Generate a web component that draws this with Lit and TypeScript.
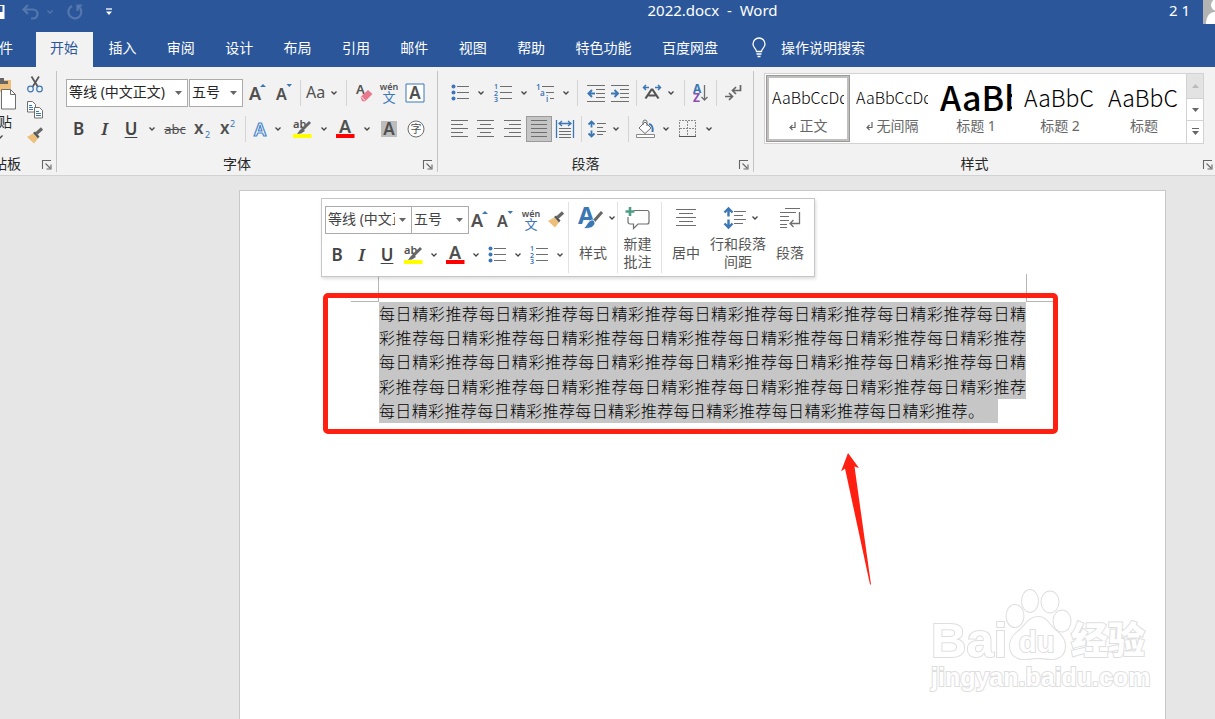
import { LitElement, html, css, svg, TemplateResult, SVGTemplateResult } from "lit";
import { customElement } from "lit/decorators.js";
import { classMap } from "lit/directives/class-map.js";

const ico = (w: number, h: number, body: SVGTemplateResult) =>
  html`<svg width=${w} height=${h} viewBox="0 0 ${w} ${h}" fill="none" aria-hidden="true">${body}</svg>`;

const GREY = "#6e6e6e";
const BLUE = "#3b76b5";

const lines = (rows: number[][]) =>
  svg`<path stroke=${GREY} d=${rows.map(([x1, x2, y]) => `M${x1} ${y}.5H${x2}`).join("")} />`;

const icons = {
  chevron: ico(8, 6, svg`<path d="M1.5 1.5 4 4l2.500-2.500" stroke="#444" stroke-width="1.300"/>`),
  caret: ico(7, 4, svg`<path d="M0 0h7L3.500 4z" fill="#666"/>`),
  launcher: ico(10, 10, svg`<path d="M.5 9V.5H9M3.500 3.500 8 8M9 4.500v4.500H4.500" stroke="#666" stroke-width="1.100"/>`),
  sub: ico(18, 18, svg`<text x="0" y="14" class="g sb" font-size="17">x</text><text x="11" y="18" class="b" font-size="9">2</text>`),
  sup: ico(18, 18, svg`<text x="0" y="14" class="g sb" font-size="17">x</text><text x="10" y="7" class="b" font-size="9">2</text>`),
  grow: ico(18, 20, svg`<text x="0" y="17" class="g sb" font-size="18">A</text><path d="M11 4h6l-3-3z" fill=${BLUE}/>`),
  shrink: ico(18, 20, svg`<text x="1" y="17" class="g sb" font-size="16">A</text><path d="M11.500 1h5.500l-2.750 3z" fill=${BLUE}/>`),
  aa: ico(22, 18, svg`<text x="1" y="14" class="g" font-size="16">Aa</text>`),
  eraser: ico(18, 20, svg`<text x="0" y="11" class="g sb" font-size="13">A</text><path d="m4.500 14 7.500-7 4.500 4-7.500 7.500-3-.500z" fill="#e8798d"/><path d="m5 13.500 4 4" stroke="#fff"/>`),
  wen: ico(20, 22, svg`<text x="10" y="8" text-anchor="middle" class="g sb" font-size="9">wén</text><text x="10" y="20" text-anchor="middle" class="b" font-size="13">文</text>`),
  boxA: ico(20, 20, svg`<path d="M1 1h18v18H1z" stroke=${BLUE} fill="#fff"/><text x="10" y="16" text-anchor="middle" class="g sb" font-size="17">A</text>`),
  outlineA: ico(18, 18, svg`<text x="9" y="15.500" text-anchor="middle" font-size="18" font-weight="600" fill="#fff" stroke="#4a86c8" stroke-width="1.200">A</text>`),
  highlight: ico(20, 20, svg`<text x="1" y="9" class="g sb" font-size="11">ab</text><path d="M18 3 10.500 10.500" stroke="#666" stroke-width="2.800"/><path d="m10 9 3 3-4 2.500-4 .500 2.500-3.500z" fill="#666"/><path d="M1 15h18.500v4H1z" fill="#ff0"/>`),
  fontColor: ico(20, 20, svg`<text x="10" y="14" text-anchor="middle" class="g sb" font-size="18">A</text><path d="M1 15h18.500v4H1z" fill="red"/>`),
  shadeA: ico(18, 18, svg`<path d="M1 1h16v16H1z" fill="#bdbdbd"/><text x="9" y="15" text-anchor="middle" class="g sb" font-size="17">A</text>`),
  circled: ico(18, 18, svg`<circle cx="9" cy="9" r="8" stroke=${GREY} fill="#fff"/><text x="9" y="13" text-anchor="middle" class="g" font-size="11">字</text>`),
  cut: ico(18, 18, svg`<path d="M5.500 1.500 12 12M13 1.500 6.500 12" stroke="#555" stroke-width="1.700"/><circle cx="4.500" cy="14" r="2.800" stroke=${BLUE} stroke-width="1.200"/><circle cx="13.500" cy="14" r="2.800" stroke=${BLUE} stroke-width="1.200"/>`),
  copy: ico(18, 18, svg`<path d="M1.500.5h5l3 3V11H1.500z" fill="#fff" stroke=${GREY}/><path d="M3 4.500h3M3 6.500h4M3 8.500h4" stroke=${BLUE}/><path d="M8.500 6.500h5l3 3v7.500h-8z" fill="#fff" stroke=${GREY}/><path d="M10 10.500h3M10 12.500h5M10 14.500h5" stroke=${BLUE}/>`),
  brush: ico(18, 18, svg`<path d="m1 10 6-3.500 5 5L8 16.500z" fill="#eebf7a"/><path d="m7 6 2-1.500 4.500 5L12 11.500z" fill="#555"/><path d="m10.500 6.500 5.500-5" stroke="#666" stroke-width="3.200"/>`),
  paste: ico(18, 34, svg`<path d="M0 4h11v12H0z" fill="#eebf7a"/><path d="M0 2h4v3h4v3H0z" fill="#666"/><path d="M1.500 13.500h9l5 5V33h-14z" fill="#fff" stroke=${GREY}/><path d="M10.500 13.500v5h5" stroke=${GREY}/>`),
  bullets: ico(18, 18, svg`<g fill=${BLUE}><circle cx="2.500" cy="2.500" r="2"/><circle cx="2.500" cy="8.500" r="2"/><circle cx="2.500" cy="14.500" r="2"/></g>${lines([[6, 18, 2], [6, 18, 8], [6, 18, 14]])}`),
  numbers: ico(18, 18, svg`<g class="b" font-size="7" font-weight="600"><text y="5">1</text><text y="11.500">2</text><text y="18">3</text></g>${lines([[6, 18, 2], [6, 18, 8], [6, 18, 14]])}`),
  multilevel: ico(24, 18, svg`<g class="b" font-size="8" font-weight="600"><text x="3" y="6">1</text><text x="7" y="12">a</text><text x="13" y="18">i</text></g>${lines([[9, 21, 2], [13, 21, 8], [17, 21, 14]])}`),
  outdent: ico(18, 18, svg`${lines([[0, 18, 1], [9, 18, 5], [9, 18, 9], [9, 18, 13], [0, 18, 17]])}<path d="M8 9.500H2M5 6 1.500 9.500 5 13" stroke=${BLUE} stroke-width="2"/>`),
  indent: ico(18, 18, svg`${lines([[0, 18, 1], [9, 18, 5], [9, 18, 9], [9, 18, 13], [0, 18, 17]])}<path d="M0 9.500h6M3.500 6 7 9.500 3.500 13" stroke=${BLUE} stroke-width="2"/>`),
  asian: ico(20, 18, svg`<path d="m3.500 14.500 6-9h1l6 9M6.500 11.500h7" stroke="#555" stroke-width="2.200"/><path d="M1.500 3.500H7M4 1 1.500 3.500 4 6M18.500 3.500H13M16 1l2.500 2.500L16 6" stroke=${BLUE} stroke-width="1.500"/>`),
  sort: ico(18, 20, svg`<text x="1" y="10" font-size="12" font-weight="700" fill=${BLUE}>A</text><text x="1" y="19" font-size="12" font-weight="700" fill="#8e4db0">Z</text><path d="M12.500 2v15M9.500 14l3 3 3-3" stroke=${GREY} stroke-width="1.300"/>`),
  marks: ico(18, 18, svg`<path d="M16.500 1v5.500H9M12 3 8.500 6.500 12 10M1 12.500h7M5 9l3.500 3.500L5 16" stroke="#666" stroke-width="1.700"/>`),
  left: ico(18, 18, lines([[0, 17, 0], [0, 12, 4], [0, 17, 8], [0, 12, 12], [0, 17, 16]])),
  center: ico(18, 18, lines([[0, 17, 0], [3, 14, 4], [0, 17, 8], [3, 14, 12], [0, 17, 16]])),
  right: ico(18, 18, lines([[0, 17, 0], [5, 17, 4], [0, 17, 8], [5, 17, 12], [0, 17, 16]])),
  justify: ico(18, 18, lines([[1, 17, 0], [1, 17, 4], [1, 17, 8], [1, 17, 12], [1, 17, 16]])),
  distribute: ico(18, 18, svg`<path d="M.5 0v18M17.500 0v18M4 3.500h10M6 1 3 3.500 6 6M12 1l3 2.500L12 6" stroke=${BLUE} stroke-width="1.300"/>${lines([[3, 15, 8], [3, 15, 11], [3, 15, 14], [3, 15, 17]])}`),
  spacing: ico(18, 18, svg`<path d="M3.500 1.500v6M3.500 10.500v6M.5 4.500l3-3 3 3M.5 13.500l3 3 3-3" stroke=${BLUE} stroke-width="1.800"/>${lines([[9, 18, 3], [9, 15, 7], [9, 18, 11], [9, 15, 14]])}`),
  bucket: ico(20, 20, svg`<path d="m3 9 6-6 6 6-6 5.500z" fill="#fff" stroke=${GREY}/><path d="M7 6V3a2 2 0 0 1 4 0v4" stroke=${GREY}/><path d="M13 5c4 1 4 4 3.500 8" stroke=${BLUE} stroke-width="2"/><path d="M.5 15.500h18v3H.5z" fill="#fff" stroke="#888"/>`),
  border: ico(18, 18, svg`<path d="M.5 16V.5h16V16M8.500 1v15M1 8.500h15" stroke="#888" stroke-dasharray="2 1"/><path d="M0 16.500h17" stroke="#555"/>`),
  styles: ico(28, 28, svg`<text x="2" y="20" font-size="24" font-weight="700" fill=${BLUE}>A</text><path d="m26 8-8 9" stroke="#666" stroke-width="3"/><path d="M18 16.500c1.500 2 1 4-1 6-2 2-6 2-10 2 3-1.500 3.500-4.500 5.500-6.500s4-2.500 5.500-1.500z" fill=${BLUE} stroke="#fff" stroke-width=".8"/>`),
  comment: ico(26, 24, svg`<path d="M9 4.500h13a2 2 0 0 1 2 2V16a2 2 0 0 1-2 2H13l-4.500 4.500V18H5a2 2 0 0 1-2-2v-5" stroke=${GREY} stroke-width="1.200"/><path d="M5 1v9M.5 5.500h9" stroke="#4f9d84" stroke-width="2.600"/>`),
  bigCenter: ico(20, 20, lines([[0, 20, 1], [3, 17, 5], [0, 20, 9], [3, 17, 13], [0, 20, 17]])),
  bigSpacing: ico(24, 24, svg`<path d="M5.500 2.500v8M5.500 13.500v8M1.500 6.500l4-4 4 4M1.500 17.500l4 4 4-4" stroke=${BLUE} stroke-width="2.400"/>${lines([[11, 23, 5], [11, 20, 9], [11, 23, 13], [11, 20, 17]])}`),
  bigPara: ico(22, 22, svg`${lines([[6, 21, 1], [1, 17, 5], [1, 10, 9], [1, 10, 13], [1, 8, 17], [1, 8, 20]])}<path d="M20.500 5v11.500H11M14.500 13 11 16.500l3.500 3.500" stroke=${GREY} stroke-width="1.300"/>`),
  save: ico(5, 18, svg`<path d="M0 2h4.500v14H0" fill="#fff"/><path d="M0 3h2.500v6H0z" fill="#2b579a"/>`),
  undo: ico(18, 16, svg`<path d="M6 1 1.500 5.500 6 10M2 5.500h9a4.500 4.500 0 0 1 0 9H9" stroke="#5577ae" stroke-width="2.200"/>`),
  redo: ico(18, 18, svg`<path d="M6 3a6.500 6.500 0 1 0 6.500.5M16 2.500h-4.500V8" stroke="#5577ae" stroke-width="2.200"/>`),
  undoMore: ico(8, 6, svg`<path d="M1.500 1.500 4 4l2.500-2.500" stroke="#5577ae" stroke-width="1.300"/>`),
  quick: ico(8, 8, svg`<path d="M1 1h6" stroke="#fff" stroke-width="1.300"/><path d="M1 3.500h6L4 7z" fill="#fff"/>`),
  bulb: ico(14, 20, svg`<path d="M4.500 13.500c0-3-3.500-3.500-3.500-7.500a6 6 0 0 1 12 0c0 4-3.500 4.500-3.500 7.500zM4.500 16h5M5.500 18.500h3" stroke="#fff" stroke-width="1.300"/>`),
  avatar: ico(12, 24, svg`<path d="M0 0h12v24H0z" fill="#b3b3b3"/><circle cx="14" cy="5" r="6" fill="#fff"/><path d="M3 24c0-7 3-12 9-12v12z" fill="#fff"/>`),
  enter: ico(7, 9, svg`<path d="M6 0v5.500H1M3.500 3 1 5.500 3.500 8" stroke="#666" stroke-width="1.200"/>`),
  up: ico(7, 4, svg`<path d="M0 4h7L3.500 0z" fill="#bbb"/>`),
  more: ico(7, 8, svg`<path d="M0 .5h7" stroke="#666"/><path d="M0 3h7L3.500 7z" fill="#666"/>`),
};

type Item = [string, TemplateResult] | null;

const tool = (label: string, content: TemplateResult, on = false) =>
  html`<button class=${classMap({ tool: true, on })} aria-label=${label}>${content}</button>`;
const strip = (items: Item[]) =>
  items.map((i) => (i ? tool(i[0], i[1], i[0] === "两端对齐") : html`<span class="sep"></span>`));
const combo = (label: string, value: string) => html`<label class="combo">
  <select aria-label=${label}><option>${value}</option></select>${icons.caret}
</label>`;
const more: Item = ["更多选项", icons.chevron];
const bold: Item = ["加粗", html`<b class="glyph">B</b>`];
const italic: Item = ["倾斜", html`<i class="glyph">I</i>`];
const underline: Item = ["下划线", html`<u class="glyph">U</u>`];

const base = css`
  :host, * { box-sizing: border-box; }
  svg { display: block; overflow: visible; flex: none; }
  svg text { font-family: "Noto Sans", "Noto Sans CJK SC", sans-serif; }
  .g { fill: #505050; }
  .b { fill: #3b76b5; }
  .sb { font-weight: 600; }
  button, select { font: inherit; color: inherit; background: none; border: 0; padding: 0; margin: 0; }
  .tool { display: flex; align-items: center; justify-content: center; height: 26px; min-width: 0; }
  .tool.on { background: #c5c5c5; border: 1px solid #9b9b9b; }
  .sep { justify-self: center; width: 1px; height: 26px; background: #d4d4d4; }
  .glyph { font: 600 17px/24px "Noto Sans", sans-serif; color: #444; text-underline-offset: 2px; }
  i.glyph { font: italic 600 17px/24px "Noto Serif", "Liberation Serif", serif; }
  .combo { position: relative; display: flex; align-items: center; height: 28px; border: 1px solid #ababab; background: #fff; min-width: 0; color: #444; font-size: 14px; }
  .combo select { appearance: none; width: 100%; height: 24px; line-height: 22px; padding: 0 16px 2px 2px; outline: 0; }
  .combo svg { position: absolute; right: 5px; }
`;

@customElement("word-header")
class WordHeader extends LitElement {
  static styles = [base, css`
    :host { display: block; background: #2b579a; color: #fff; }
    .title { display: grid; grid-template-columns: 1fr auto 1fr; height: 32px; line-height: 20px; font-size: 15px; }
    .title h1 { margin: 0; font: inherit; white-space: pre; padding-left: 210px; }
    .quick { display: flex; align-items: center; height: 24px; gap: 12px; }
    .quick .pair { display: flex; align-items: center; gap: 6px; padding-left: 5px; }
    .quick .last { padding-left: 9px; }
    .user { display: flex; justify-content: flex-end; gap: 13px; white-space: pre; }
    nav { display: flex; height: 35px; font-size: 14px; line-height: 32px; }
    .tabs { display: flex; justify-content: space-between; width: 697px; }
    a { color: inherit; text-decoration: none; padding: 0 15px; white-space: nowrap; }
    a.file { width: 36px; padding: 0 23px 0 0; display: flex; justify-content: flex-end; overflow: hidden; }
    .tabs a.on { background: #f2f2f2; color: #2b579a; padding-left: 14px; }
    .tell { display: flex; align-items: center; gap: 15px; margin-left: 19px; height: 32px; }
  `];
  render() {
    const tabs = ["开始", "插入", "审阅", "设计", "布局", "引用", "邮件", "视图", "帮助", "特色功能", "百度网盘"];
    return html`
      <div class="title">
        <div class="quick">
          <button aria-label="保存">${icons.save}</button>
          <span class="pair"><button aria-label="撤消">${icons.undo}</button><button aria-label="撤消列表">${icons.undoMore}</button></span>
          <button aria-label="重复">${icons.redo}</button>
          <button class="last" aria-label="自定义快速访问工具栏">${icons.quick}</button>
        </div>
        <h1>2022.docx  -  Word</h1>
        <div class="user"><span>2 1</span>${icons.avatar}</div>
      </div>
      <nav>
        <a class="file" href="#">文件</a>
        <div class="tabs">${tabs.map((t, i) => html`<a href="#" class=${classMap({ on: i === 0 })}>${t}</a>`)}</div>
        <button class="tell">${icons.bulb}操作说明搜索</button>
      </nav>`;
  }
}

@customElement("word-ribbon")
class WordRibbon extends LitElement {
  static styles = [base, css`
    :host { display: flex; height: 109px; padding: 4px 0 3px; background: #f2f2f2; border-bottom: 1px solid #d2d2d2; color: #262626; font-size: 14px; }
    section { display: flex; flex-direction: column; padding-top: 8px; border-right: 1px solid #c4c4c4; flex: none; }
    .clip { width: 57px; padding-top: 0; }
    .font { width: 381px; }
    .para { width: 316px; }
    .styles { flex: 1; border: 0; padding-top: 2px; min-width: 0; }
    .rows { display: grid; gap: 9px; padding-left: 8px; }
    .row { display: grid; align-items: center; height: 27px; }
    .font .rows { padding-left: 9px; }
    .combo { color: #262626; margin-right: 1px; }
    .f1 { grid-template-columns: 123px 55px 27px 26px 6px 26px 10px 14px 23px 26px 26px; }
    .f2 { grid-template-columns: 25px 27px 26px 16px 30px 26px 26px 6px 24px 12px 36px 8px 34px 10px 34px 20px; }
    .p1 { grid-template-columns: 28px 13px 31px 12px 30px 11px 13px 23px 26px 6px 26px 11px 16px 18px 12px 22px; }
    .p2 { grid-template-columns: 27px 26px 27px 26px 26px 6px 26px 11px 15px 20px 20px 24px 18px; }
    footer { display: flex; margin-top: auto; height: 16px; line-height: 16px; }
    footer span { flex: 1; text-align: center; }
    footer button { width: 20px; display: flex; justify-content: flex-end; align-items: center; padding: 2px 4px 0 0; }
    .styles footer button { padding-right: 2px; }
    .clip footer span { display: flex; justify-content: flex-end; overflow: hidden; padding-right: 15px; white-space: nowrap; height: 16px; }
    .clipbody { display: flex; align-items: flex-start; gap: 8px; }
    .paste { width: 18px; display: flex; flex-direction: column; align-items: flex-end; overflow: hidden; line-height: 16px; gap: 4px; white-space: nowrap; padding-top: 5px; }
    .paste span { padding-right: 6px; }
    .paste .arrow { padding-right: 14px; }
    .stack { display: grid; }
    .strike { font-size: 13px; text-decoration: line-through; color: #505050; }
    .gallery { display: flex; margin: 0 11px 0 10px; height: 71px; border: 1px solid #d2d2d2; background: #fff; }
    .cards { flex: 1; display: flex; overflow: hidden; padding: 1px; }
    .card { width: 84px; flex: none; height: 67px; border: 3px solid transparent; padding: 0 3px; display: grid; grid-template-rows: 39px 18px; color: #666; }
    .card.on { border-color: #c1bfbd; outline: 1px solid #999; outline-offset: -1px; }
    .sample { display: block; text-align: left; overflow: hidden; white-space: nowrap; font: 300 16px/39px "Noto Sans CJK SC", sans-serif; color: #000; }
    .sample.h1 { font-weight: 500; font-size: 34px; line-height: 37px; }
    .sample.h2 { font-size: 23px; }
    .name { display: flex; align-items: center; justify-content: center; gap: 4px; line-height: 18px; }
    .scroll { width: 17px; display: grid; grid-template-rows: 25px 22px 1fr; border-left: 1px solid #d2d2d2; }
    .scroll button { display: grid; place-items: center; border-bottom: 1px solid #d2d2d2; }
    .scroll button:first-child { background: #e3e3e3; }
    .scroll button:last-child { border: 0; }
  `];
  foot(name: string) {
    return html`<footer><span>${name}</span><button aria-label="${name}设置">${icons.launcher}</button></footer>`;
  }
  render() {
    const cards = [
      ["AaBbCcDd", "正文", "", "1"], ["AaBbCcDd", "无间隔", "", "1"], ["AaBb", "标题 1", "h1", ""],
      ["AaBbC", "标题 2", "h2", ""], ["AaBbC", "标题", "h2", ""],
    ];
    return html`
      <section class="clip">
        <div class="clipbody">
          <button class="paste">${icons.paste}<span>粘贴</span><span class="arrow">${icons.chevron}</span></button>
          <div class="stack">${strip([["剪切", icons.cut], ["复制", icons.copy], ["格式刷", icons.brush]])}</div>
        </div>
        ${this.foot("剪贴板")}
      </section>
      <section class="font">
        <div class="rows">
          <div class="row f1">${combo("字体", "等线 (中文正文)")}${combo("字号", "五号")}
            ${strip([["增大字号", icons.grow], ["减小字号", icons.shrink], null, ["更改大小写", icons.aa], more, null, ["清除格式", icons.eraser], ["拼音指南", icons.wen], ["字符边框", icons.boxA]])}</div>
          <div class="row f2">
            ${strip([bold, italic, underline, more, ["删除线", html`<span class="strike">abc</span>`], ["下标", icons.sub], ["上标", icons.sup], null, ["文本效果", icons.outlineA], more, ["突出显示", icons.highlight], more, ["字体颜色", icons.fontColor], more, ["字符底纹", icons.shadeA], ["带圈字符", icons.circled]])}</div>
        </div>
        ${this.foot("字体")}
      </section>
      <section class="para">
        <div class="rows">
          <div class="row p1">
            ${strip([["项目符号", icons.bullets], more, ["编号", icons.numbers], more, ["多级列表", icons.multilevel], more, null, ["减少缩进", icons.outdent], ["增加缩进", icons.indent], null, ["中文版式", icons.asian], more, null, ["排序", icons.sort], null, ["显示编辑标记", icons.marks]])}</div>
          <div class="row p2">
            ${strip([["左对齐", icons.left], ["居中", icons.center], ["右对齐", icons.right], ["两端对齐", icons.justify], ["分散对齐", icons.distribute], null, ["行距", icons.spacing], more, null, ["底纹", icons.bucket], more, ["边框", icons.border], more])}</div>
        </div>
        ${this.foot("段落")}
      </section>
      <section class="styles">
        <div class="gallery">
          <div class="cards">
            ${cards.map(([s, n, k, e], i) => html`<button class=${classMap({ card: true, on: i === 0 })}>
              <span class="sample ${k}">${s}</span><span class="name">${e ? icons.enter : ""}${n}</span></button>`)}
          </div>
          <div class="scroll">
            <button aria-label="上一行">${icons.up}</button><button aria-label="下一行">${icons.caret}</button><button aria-label="其他">${icons.more}</button>
          </div>
        </div>
        ${this.foot("样式")}
      </section>`;
  }
}

@customElement("mini-toolbar")
class MiniToolbar extends LitElement {
  static styles = [base, css`
    :host { display: flex; height: 79px; padding: 3px 0 3px 3px; background: #fff; border: 1px solid #c6c6c6; box-shadow: 1px 2px 3px #0002; color: #555; font-size: 14px; }
    .rows { display: grid; grid-template-rows: 35px 36px; width: 243px; }
    .row { display: grid; align-items: center; }
    .m1 { grid-template-columns: 86px 57px 24px 25px 27px 24px; }
    .m2 { grid-template-columns: 24px 25px 26px 26px 16px 26px 16px 26px 16px 26px 16px; }
    .combo { margin-right: -1px; }
    .big { display: grid; grid-template-rows: 32px 37px; align-content: start; justify-items: center; align-items: center; line-height: 18px; border-left: 1px solid #e2e2e2; height: 71px; }
    .big.plain { border: 0; }
    .icon.pair { display: flex; align-items: center; gap: 4px; padding-left: 6px; }
    .w49 { width: 49px; }
    .w48 { width: 48px; }
    .w44 { width: 44px; padding-right: 4px; }
    .w56 { width: 56px; }
    .nowrap { white-space: nowrap; }
  `];
  render() {
    return html`
      <div class="rows">
        <div class="row m1">${combo("字体", "等线 (中文正文)")}${combo("字号", "五号")}
          ${strip([["增大字号", icons.grow], ["减小字号", icons.shrink], ["拼音指南", icons.wen], ["格式刷", icons.brush]])}</div>
        <div class="row m2">
          ${strip([bold, italic, underline, ["突出显示", icons.highlight], more, ["字体颜色", icons.fontColor], more, ["项目符号", icons.bullets], more, ["编号", icons.numbers], more])}</div>
      </div>
      <button class="big w49"><span class="icon pair">${icons.styles}${icons.chevron}</span><span>样式</span></button>
      <button class="big w44"><span class="icon">${icons.comment}</span><span>新建<br>批注</span></button>
      <button class="big w49"><span class="icon">${icons.bigCenter}</span><span>居中</span></button>
      <button class="big plain w56"><span class="icon pair">${icons.bigSpacing}${icons.chevron}</span><span class="nowrap">行和段落<br>间距</span></button>
      <button class="big plain w48"><span class="icon">${icons.bigPara}</span><span>段落</span></button>`;
  }
}

@customElement("word-page")
class WordPage extends LitElement {
  static styles = [base, css`
    :host { display: block; position: relative; background: #fff; border: 1px solid #c8c8c8; border-bottom: 0; padding: 83px 139px 0; min-height: 100%; }
    .marks { display: flex; justify-content: space-between; margin: 0 -28px; }
    .mark { width: 28px; height: 28px; border: 0 solid #b5b5b5; border-bottom-width: 1px; }
    .mark.l { border-right-width: 1px; }
    .mark.r { border-left-width: 1px; }
    .text { position: relative; }
    p { margin: 0; display: grid; grid-auto-rows: 1fr; min-height: 121px; font: 300 16px/22px "Noto Sans CJK SC", sans-serif; color: #000; }
    p span { background: #c6c6c6; text-align: justify; text-align-last: justify; white-space: nowrap; }
    p span:last-child { margin-right: 28px; padding-right: 14px; }
    .frame { position: absolute; inset: -9px -32px -11px -56px; border: 5px solid #ff2012; border-radius: 5px; }
    .arrow { position: absolute; left: 600px; top: 262px; }
    mini-toolbar { position: absolute; left: 81px; top: 7px; z-index: 1; }
    .logo { position: absolute; right: 5px; top: 390px; }
    .logo text, .logo path, .logo ellipse { fill: #fff; stroke: #dedede; stroke-width: 2px; paint-order: stroke; }
    .logo .lat { font-family: "Liberation Sans", sans-serif; font-weight: 700; }
    .logo .han { font-family: "Noto Sans CJK SC", sans-serif; font-weight: 900; }
  `];
  render() {
    const phrase = "每日精彩推荐";
    const all = phrase.repeat(32);
    const rows = [0, 39, 78, 117].map((s) => all.slice(s, s + 39)).concat(phrase.repeat(6) + "。");
    return html`
      <mini-toolbar></mini-toolbar>
      <div class="marks"><span class="mark l"></span><span class="mark r"></span></div>
      <div class="text">
        <p>${rows.map((r) => html`<span>${r}</span>`)}</p>
        <div class="frame"></div>
      </div>
      <div class="arrow">${ico(32, 132, svg`<path fill="#ff2012" d="m8 0 11 15-4.500-1.500L31 131.500h-1L5 15.500 1 18.500z"/>`)}</div>
      <div class="logo">${ico(230, 120, svg`
        <text class="lat" x="1" y="76" font-size="49">Bai</text>
        <ellipse cx="85" cy="35" rx="8.500" ry="11"/><ellipse cx="100" cy="20" rx="8" ry="11"/>
        <ellipse cx="120" cy="21" rx="8.500" ry="10.500"/><ellipse cx="132" cy="40" rx="8.500" ry="10.500"/>
        <path d="M108 36c8 0 10 6 16 12 6 5 11 9 11 17 0 9-6 13-13 13-6 0-9-1-14-1s-8 1-14 1c-7 0-14-4-14-13 0-8 5-12 11-17 6-6 9-12 17-12z"/>
        <text class="lat" x="89" y="71" font-size="29">du</text>
        <text class="han" x="141" y="73" font-size="37">经验</text>
        <text class="lat" x="1" y="105" font-size="25">jingyan.baidu.com</text>`)}</div>`;
  }
}

@customElement("app-root")
class AppRoot extends LitElement {
  static styles = css`
    :host { display: flex; flex-direction: column; height: 100vh; overflow: hidden; background: #e6e6e6; font-family: "Noto Sans", "Noto Sans CJK SC", sans-serif; }
    word-header, word-ribbon { flex: none; }
    main { flex: 1; min-height: 0; padding: 14px 49px 0 239px; display: grid; }
  `;
  render() {
    return html`<word-header></word-header><word-ribbon></word-ribbon><main><word-page></word-page></main>`;
  }
}
